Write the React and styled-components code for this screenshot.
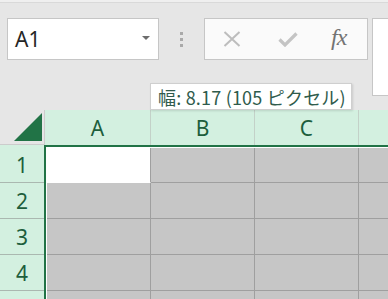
import React from "react";
import styled, { createGlobalStyle } from "styled-components";

const Global = createGlobalStyle`
  html, body { margin: 0; padding: 0; overflow: hidden; background: #e6e6e6; }
  #root { width: 388px; height: 299px; }
`;

const GREEN = "#217346";
const HEAD_BG = "#d3f0e0";
const UI_FONT = `"Noto Sans", "Noto Sans CJK JP", sans-serif`;

const Page = styled.div`
  position: relative;
  width: 388px;
  height: 299px;
  overflow: hidden;
  background: #e6e6e6;
  border-top: 2px solid #efefef;
  box-sizing: border-box;
`;

const TopLine = styled.div`
  height: 1px;
  background: #d9d9d9;
`;

const Toolbar = styled.div`
  display: flex;
  align-items: flex-start;
  height: 107px;
  padding: 15px 0 0 7px;
  box-sizing: border-box;
  & > * { flex-shrink: 0; }
`;

const NameBox = styled.div`
  width: 152px;
  height: 42px;
  box-sizing: border-box;
  background: #fff;
  border: 1px solid #c6c6c6;
  display: flex;
  align-items: center;
  justify-content: space-between;
  padding: 0 8px 0 7px;
  font-family: ${UI_FONT};
  font-size: 21px;
  color: #262626;
`;

const Caret = styled.span`
  width: 0;
  height: 0;
  border-left: 4px solid transparent;
  border-right: 4px solid transparent;
  border-top: 4px solid #6d6d6d;
  margin-top: -3px;
`;

const Grip = styled.div`
  width: 45px;
  height: 42px;
  display: flex;
  flex-direction: column;
  align-items: center;
  justify-content: center;
  gap: 3px;
`;

const GripDot = styled.span`
  width: 3px;
  height: 3px;
  background: #a9a9a9;
`;

const FxBox = styled.div`
  width: 164px;
  height: 42px;
  box-sizing: border-box;
  background: #fafafa;
  border: 1px solid #c6c6c6;
  display: flex;
  align-items: center;
  padding-left: 18px;
`;

const FxButton = styled.div`
  width: ${(p) => p.$w}px;
  height: 40px;
  display: flex;
  align-items: center;
`;

const FxText = styled.span`
  font-family: "Liberation Serif", "DejaVu Serif", serif;
  font-style: italic;
  font-size: 24px;
  color: #737373;
  letter-spacing: -1px;
  margin-top: -4px;
`;

const FormulaInput = styled.div`
  margin-left: 4px;
  width: 100px;
  height: 78px;
  box-sizing: border-box;
  background: #fff;
  border: 1px solid #c6c6c6;
`;

const HeaderRow = styled.div`
  display: flex;
  height: 35px;
  font-family: ${UI_FONT};
  & > * { flex-shrink: 0; }
`;

const Corner = styled.div`
  width: 45px;
  box-sizing: border-box;
  border-right: 1px solid #cccccc;
  border-bottom: 1px solid #cccccc;
  display: flex;
  align-items: flex-end;
  justify-content: flex-end;
  padding: 0 2px 3px 0;
`;

const ColHead = styled.div`
  width: ${(p) => p.$w}px;
  box-sizing: border-box;
  background: ${HEAD_BG};
  border-right: 1px solid #c3d1c8;
  display: flex;
  align-items: center;
  justify-content: center;
  font-size: 21px;
  color: #1d5e3c;
  padding-top: 1px;
`;

const Body = styled.div`
  display: flex;
`;

const RowHeads = styled.div`
  width: 44px;
  flex-shrink: 0;
  display: flex;
  flex-direction: column;
  background: ${HEAD_BG};
  font-family: ${UI_FONT};
`;

const RowHead = styled.div`
  height: ${(p) => p.$h}px;
  box-sizing: border-box;
  border-bottom: 1px solid #aab8b0;
  display: flex;
  align-items: center;
  justify-content: center;
  font-size: 21px;
  color: #1d5e3c;
  padding-top: ${(p) => (p.$first ? 2 : 0)}px;
`;

const Selection = styled.div`
  flex: 1;
  border-left: 2px solid ${GREEN};
  border-top: 2px solid ${GREEN};
  padding: 1px 0 0 1px;
  background: #fff;
  display: flex;
  flex-direction: column;
`;

const CellRow = styled.div`
  display: flex;
  height: ${(p) => p.$h}px;
  flex-shrink: 0;
`;

const Cell = styled.div`
  width: 104px;
  flex-shrink: 0;
  box-sizing: border-box;
  background: ${(p) => (p.$active ? "#fff" : "#c6c6c6")};
  border-right: 1px solid #9f9f9f;
  border-bottom: 1px solid ${(p) => (p.$active ? "#fff" : "#9f9f9f")};
`;

const Tooltip = styled.div`
  position: absolute;
  left: 150px;
  top: 81px;
  height: 27px;
  box-sizing: border-box;
  padding: 0 5px 0 7px;
  background: #fff;
  border: 1px solid #cfcfcf;
  box-shadow: 1px 1px 2px rgba(0, 0, 0, 0.12);
  display: flex;
  align-items: center;
  white-space: nowrap;
  font-family: "Noto Sans CJK JP", "Noto Sans", sans-serif;
  font-size: 18px;
  letter-spacing: 0.2px;
  color: #2f5b4c;
`;

const rows = [1, 2, 3, 4, 5];

export default function App() {
  return (
    <>
      <Global />
      <Page>
        <TopLine />
        <Toolbar>
          <NameBox>
            <span>A1</span>
            <Caret />
          </NameBox>
          <Grip>
            <GripDot />
            <GripDot />
            <GripDot />
          </Grip>
          <FxBox>
            <FxButton $w={55}>
              <svg width="18" height="16" viewBox="0 0 18 16">
                <path d="M1.5 1 L16.5 15 M16.5 1 L1.5 15" stroke="#bdbdbd" strokeWidth="2" fill="none" />
              </svg>
            </FxButton>
            <FxButton $w={53}>
              <svg width="20" height="15" viewBox="0 0 20 15">
                <path d="M1.5 7.5 L7 13 L18.5 1.5" stroke="#c4c4c4" strokeWidth="3.2" fill="none" />
              </svg>
            </FxButton>
            <FxButton $w={30}>
              <FxText>fx</FxText>
            </FxButton>
          </FxBox>
          <FormulaInput />
        </Toolbar>
        <HeaderRow>
          <Corner>
            <svg width="28" height="28" viewBox="0 0 28 28">
              <polygon points="28,0 28,28 0,28" fill={GREEN} />
            </svg>
          </Corner>
          <ColHead $w={106}>A</ColHead>
          <ColHead $w={104}>B</ColHead>
          <ColHead $w={104}>C</ColHead>
          <ColHead $w={104} />
        </HeaderRow>
        <Body>
          <RowHeads>
            {rows.map((r, i) => (
              <RowHead key={r} $h={i === 0 ? 38 : 36} $first={i === 0}>
                {r < 5 ? r : null}
              </RowHead>
            ))}
          </RowHeads>
          <Selection>
            {rows.map((r, i) => (
              <CellRow key={r} $h={i === 0 ? 35 : 36}>
                {[0, 1, 2, 3].map((j) => (
                  <Cell key={j} $active={i === 0 && j === 0} />
                ))}
              </CellRow>
            ))}
          </Selection>
        </Body>
        <Tooltip>幅: 8.17 (105 ピクセル)</Tooltip>
      </Page>
    </>
  );
}
